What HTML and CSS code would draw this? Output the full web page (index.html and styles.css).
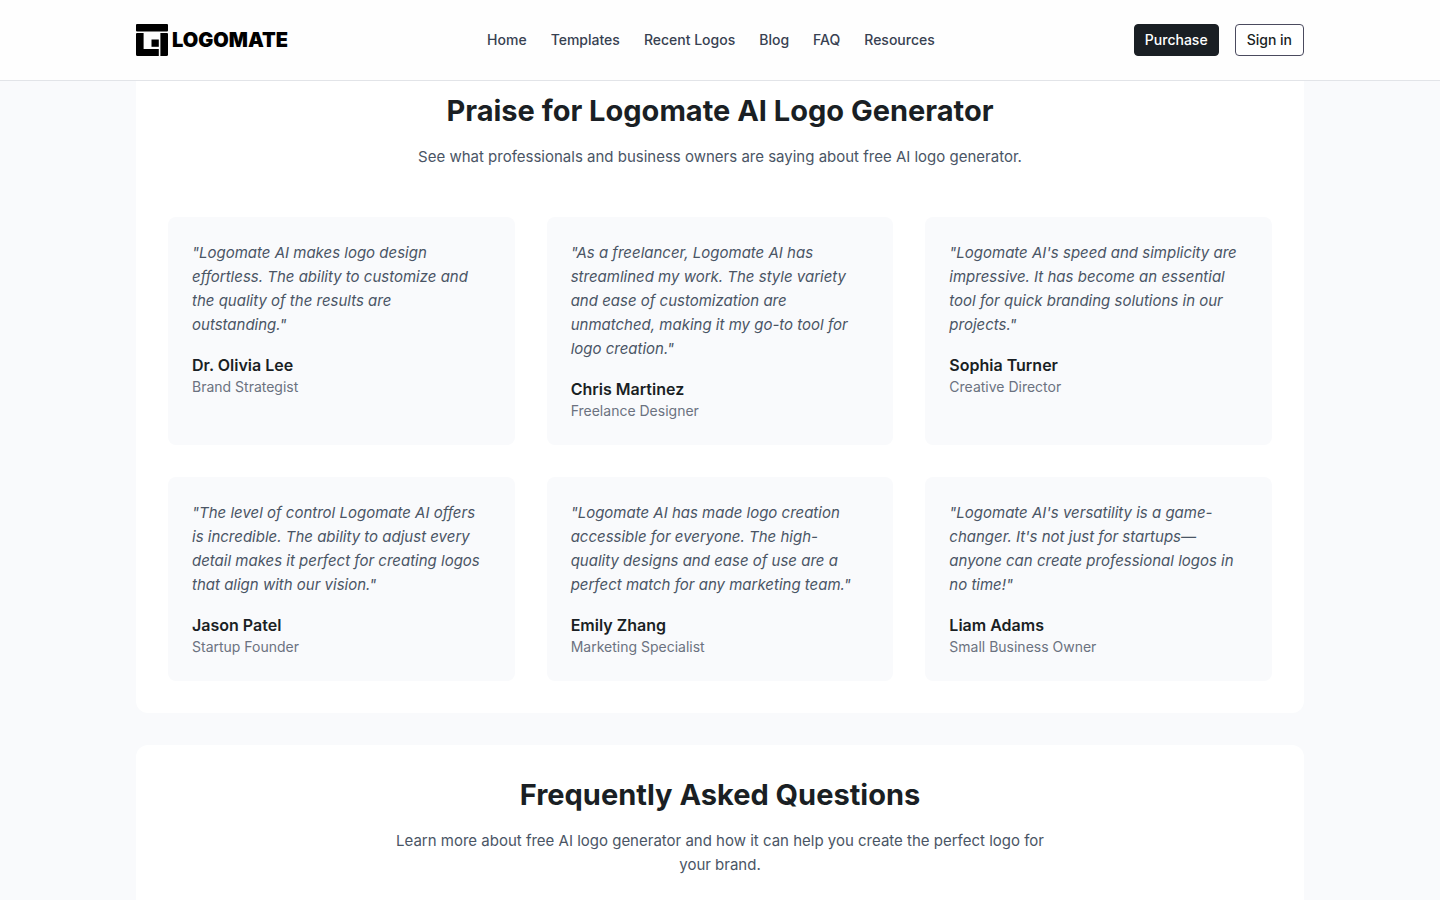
FILE: index.html
```
<!DOCTYPE html>
<html lang="en">
<head>
  <meta charset="UTF-8">
  <title>Logomate AI Logo Generator</title>
  <meta name="viewport" content="width=device-width, initial-scale=1.0">
  <link rel="stylesheet" href="styles.css">
</head>
<body>
  <!-- Header -->
  <header class="site-header">
    <div class="container header-inner">
      <a href="#home" class="logo">
        <svg class="logo-mark" viewBox="0 0 32 32" aria-hidden="true">
          <path d="M1 0h30a1 1 0 0 1 1 1v5.5a1 1 0 0 1-1 1H1a1 1 0 0 1-1-1V1a1 1 0 0 1 1-1z"/>
          <path d="M1 9h6.6v16h15.2v7H1.5A1.5 1.5 0 0 1 0 30.5V10a1 1 0 0 1 1-1z"/>
          <path d="M15.5 15.5h7.3v7.3h-7.3z"/>
          <path d="M24.4 9H31a1 1 0 0 1 1 1v20.5a1.5 1.5 0 0 1-1.5 1.500h-6.1z"/>
        </svg>
        <span class="logo-text">LOGOMATE</span>
      </a>
      <nav class="nav-links">
        <a href="#home">Home</a>
        <a href="#templates">Templates</a>
        <a href="#recent">Recent Logos</a>
        <a href="#blog">Blog</a>
        <a href="#faq">FAQ</a>
        <a href="#resources">Resources</a>
      </nav>
      <div class="header-actions">
        <button type="button" class="btn btn-primary">Purchase</button>
        <button type="button" class="btn btn-outline">Sign in</button>
      </div>
    </div>
  </header>

  <main class="container main">
    <!-- Testimonials -->
    <section class="panel">
      <div class="section-head">
        <h2>Praise for Logomate AI Logo Generator</h2>
        <p>See what professionals and business owners are saying about free AI logo generator.</p>
      </div>
      <div class="testimonial-grid">
        <article class="testimonial">
          <p class="quote">"Logomate AI makes logo design effortless. The ability to customize and the quality of the results are outstanding."</p>
          <h3>Dr. Olivia Lee</h3>
          <p class="role">Brand Strategist</p>
        </article>
        <article class="testimonial">
          <p class="quote">"As a freelancer, Logomate AI has streamlined my work. The style variety and ease of customization are unmatched, making it my go-to tool for logo creation."</p>
          <h3>Chris Martinez</h3>
          <p class="role">Freelance Designer</p>
        </article>
        <article class="testimonial">
          <p class="quote">"Logomate AI's speed and simplicity are impressive. It has become an essential tool for quick branding solutions in our projects."</p>
          <h3>Sophia Turner</h3>
          <p class="role">Creative Director</p>
        </article>
        <article class="testimonial">
          <p class="quote">"The level of control Logomate AI offers is incredible. The ability to adjust every detail makes it perfect for creating logos that align with our vision."</p>
          <h3>Jason Patel</h3>
          <p class="role">Startup Founder</p>
        </article>
        <article class="testimonial">
          <p class="quote">"Logomate AI has made logo creation accessible for everyone. The high-quality designs and ease of use are a perfect match for any marketing team."</p>
          <h3>Emily Zhang</h3>
          <p class="role">Marketing Specialist</p>
        </article>
        <article class="testimonial">
          <p class="quote">"Logomate AI's versatility is a game-changer. It's not just for startups—anyone can create professional logos in no time!"</p>
          <h3>Liam Adams</h3>
          <p class="role">Small Business Owner</p>
        </article>
      </div>
    </section>

    <!-- FAQ -->
    <section class="panel" id="faq">
      <div class="section-head">
        <h2>Frequently Asked Questions</h2>
        <p>Learn more about free AI logo generator and how it can help you create the perfect logo for your brand.</p>
      </div>
    </section>
  </main>
</body>
</html>
```
FILE: styles.css
```
* {
  margin: 0;
  padding: 0;
  box-sizing: border-box;
}

body {
  font-family: Inter, "Liberation Sans", sans-serif;
  font-size: 15px;
  line-height: 24px;
  color: #1a1f24;
  background: #f9fafc;
}

a {
  color: inherit;
  text-decoration: none;
}

.container {
  max-width: 1168px;
  margin: 0 auto;
}

/* Header */
.site-header {
  position: fixed;
  top: 0;
  left: 0;
  right: 0;
  z-index: 10;
  background: #fefefe;
  border-bottom: 1px solid #e2e4e8;
}

.header-inner {
  display: flex;
  align-items: center;
  justify-content: space-between;
  padding: 24px 0;
}

.logo {
  display: flex;
  align-items: center;
  gap: 4px;
  color: #000;
}

.logo-mark {
  width: 32px;
  height: 32px;
  fill: currentColor;
}

.logo-text {
  font-size: 20px;
  font-weight: 900;
}

.nav-links {
  display: flex;
  gap: 24px;
  font-size: 14px;
  font-weight: 500;
  line-height: 20px;
  color: #374151;
}

.nav-links a:hover {
  color: #1a1f24;
}

.header-actions {
  display: flex;
  gap: 16px;
}

.btn {
  height: 32px;
  padding: 0 11px;
  border: 1px solid #1a1f24;
  border-radius: 4px;
  font-family: inherit;
  font-size: 14px;
  font-weight: 500;
  line-height: 20px;
  cursor: pointer;
}

.btn-primary {
  padding: 0 10px;
  background: #1a1f24;
  color: #fff;
}

.btn-outline {
  background: #fff;
  border-color: #4a4a5e;
  color: #1a1f24;
}

/* Sections */
.main {
  display: flex;
  flex-direction: column;
  gap: 32px;
  padding: 61px 0 32px;
}

.panel {
  padding: 32px;
  background: #fff;
  border-radius: 12px;
}

.section-head {
  max-width: 672px;
  margin: 0 auto 48px;
  text-align: center;
}

.section-head h2 {
  margin-bottom: 16px;
  font-size: 29px;
  font-weight: 700;
  line-height: 36px;
}

.section-head p {
  color: #4a5565;
}

/* Testimonials */
.testimonial-grid {
  display: grid;
  grid-template-columns: repeat(3, 1fr);
  gap: 32px;
}

.testimonial {
  padding: 24px;
  background: #f9fafc;
  border-radius: 8px;
}

.quote {
  margin-bottom: 16px;
  padding-right: 4px;
  font-style: italic;
  color: #4a5565;
}

.testimonial h3 {
  font-size: 16px;
  font-weight: 600;
}

.role {
  font-size: 14px;
  line-height: 20px;
  color: #6b7280;
}

@media (max-width: 1200px) {
  .header-inner,
  .main {
    padding-left: 16px;
    padding-right: 16px;
  }
}

@media (max-width: 768px) {
  .nav-links {
    display: none;
  }

  .testimonial-grid {
    grid-template-columns: 1fr;
  }
}
```
